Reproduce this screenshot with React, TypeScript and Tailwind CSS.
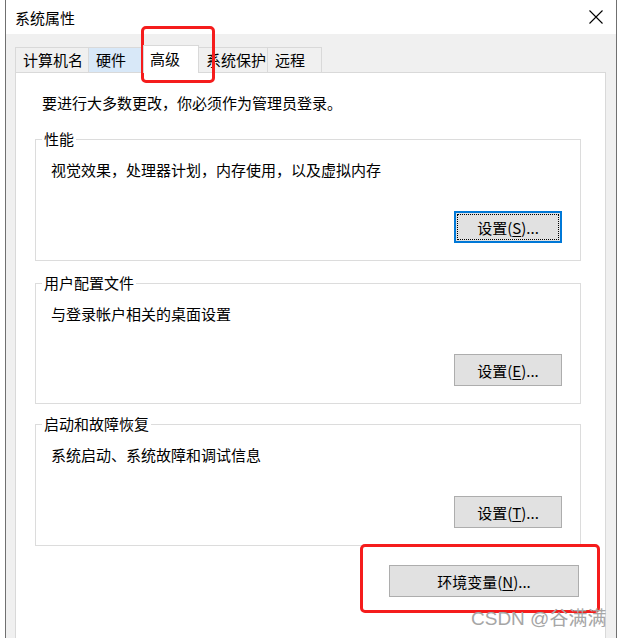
import React from "react";

const font = {
  fontFamily: '"Noto Sans CJK SC", "Microsoft YaHei", sans-serif',
};

type TabProps = { label: string; w: string; state?: "hover" | "active" };

const Tab = ({ label, w, state }: TabProps) => {
  if (state === "active") {
    return (
      <div
        className={`relative z-10 -mb-px -ml-px h-[28px] ${w} border border-b-0 border-[#d9d9d9] bg-white pl-[6px] pt-[2px] leading-[22px]`}
      >
        {label}
      </div>
    );
  }
  return (
    <div
      className={`-ml-px h-[25px] ${w} border border-b-0 border-[#d9d9d9] pl-[7px] leading-[23px] ${
        state === "hover" ? "bg-[#d8e8f8]" : "bg-[#f0f0f0]"
      }`}
    >
      {label}
    </div>
  );
};

const SetButton = ({
  text,
  hot,
  focused,
}: {
  text: string;
  hot: string;
  focused?: boolean;
}) => (
  <div
    className={`flex h-[32px] w-[108px] items-center justify-center bg-[#e1e1e1] ${
      focused ? "border-2 border-[#0078d7] p-px" : "border border-[#adadad]"
    }`}
  >
    <div
      className={`flex h-full w-full items-center justify-center ${
        focused ? "border border-dotted border-black" : ""
      }`}
    >
      <span className="leading-none">
        {text}(<span className="underline underline-offset-2">{hot}</span>)...
      </span>
    </div>
  </div>
);

const GroupBox = ({
  title,
  desc,
  h,
  mt,
  children,
}: {
  title: string;
  desc: string;
  h: string;
  mt: string;
  children: React.ReactNode;
}) => (
  <div
    className={`relative ml-[19px] mr-[24px] ${mt} ${h} flex flex-col border border-[#dcdcdc]`}
  >
    <div className="absolute -top-[11px] left-[6px] bg-white px-[2px] leading-[20px]">
      {title}
    </div>
    <div className="pl-[15px] pt-[20px] leading-[20px]">{desc}</div>
    <div className="mt-auto flex justify-end pb-[17px] pr-[18px]">
      {children}
    </div>
  </div>
);

export default function App() {
  return (
    <div
      className="relative flex h-[638px] w-[619px] overflow-hidden bg-white text-[15px] text-[#000]"
      style={font}
    >
      <div className="w-[5px] shrink-0 bg-white" />
      <div className="w-px shrink-0 bg-[#707070]" />

      {/* window */}
      <div className="flex w-[610px] shrink-0 flex-col">
        {/* title bar */}
        <div className="flex h-[34px] items-center justify-between bg-white pl-[9px] pr-[13px]">
          <span className="leading-none">系统属性</span>
          <svg width="14" height="14" viewBox="0 0 14 14">
            <path d="M0.5 0.5 L13.5 13.5 M13.5 0.5 L0.5 13.5" stroke="#000" strokeWidth="1.1" />
          </svg>
        </div>

        {/* body */}
        <div className="flex flex-1 flex-col bg-[#f0f0f0] pl-[9px] pr-[10px]">
          {/* tabs */}
          <div className="flex h-[38px] items-end pl-px">
            <Tab label="计算机名" w="w-[74px]" />
            <Tab label="硬件" w="w-[56px]" state="hover" />
            <Tab label="高级" w="w-[56px]" state="active" />
            <Tab label="系统保护" w="w-[70px]" />
            <Tab label="远程" w="w-[55px]" />
          </div>

          {/* panel */}
          <div className="flex flex-1 flex-col border border-b-0 border-[#d9d9d9] bg-white">
            <div className="pl-[26px] pt-[20px] leading-[20px]">
              要进行大多数更改，你必须作为管理员登录。
            </div>

            <GroupBox
              title="性能"
              desc="视觉效果，处理器计划，内存使用，以及虚拟内存"
              h="h-[122px]"
              mt="mt-[26px]"
            >
              <SetButton text="设置" hot="S" focused />
            </GroupBox>

            <GroupBox
              title="用户配置文件"
              desc="与登录帐户相关的桌面设置"
              h="h-[121px]"
              mt="mt-[22px]"
            >
              <SetButton text="设置" hot="E" />
            </GroupBox>

            <GroupBox
              title="启动和故障恢复"
              desc="系统启动、系统故障和调试信息"
              h="h-[122px]"
              mt="mt-[20px]"
            >
              <SetButton text="设置" hot="T" />
            </GroupBox>

            <div className="mt-[19px] flex justify-end pr-[26px]">
              <div className="flex h-[32px] w-[190px] items-center justify-center border border-[#adadad] bg-[#e1e1e1]">
                <span className="leading-none">
                  环境变量(<span className="underline underline-offset-2">N</span>)...
                </span>
              </div>
            </div>
          </div>
        </div>
      </div>

      <div className="w-px shrink-0 bg-[#707070]" />
      <div className="flex-1 bg-white" />

      {/* annotations */}
      <div className="pointer-events-none absolute left-[141px] top-[26px] h-[57px] w-[74px] rounded-[5px] border-[3px] border-[#f51c1c]" />
      <div className="pointer-events-none absolute left-[360px] top-[544px] h-[69px] w-[240px] rounded-[5px] border-[3px] border-[#f51c1c]" />

      <div
        className="pointer-events-none absolute left-[471px] top-[607px] text-[19px] font-normal leading-[24px] text-[#a6a6a6]"
        style={{ fontFamily: '"Liberation Sans", "Noto Sans CJK SC", sans-serif' }}
      >
        CSDN @谷满满
      </div>
    </div>
  );
}
